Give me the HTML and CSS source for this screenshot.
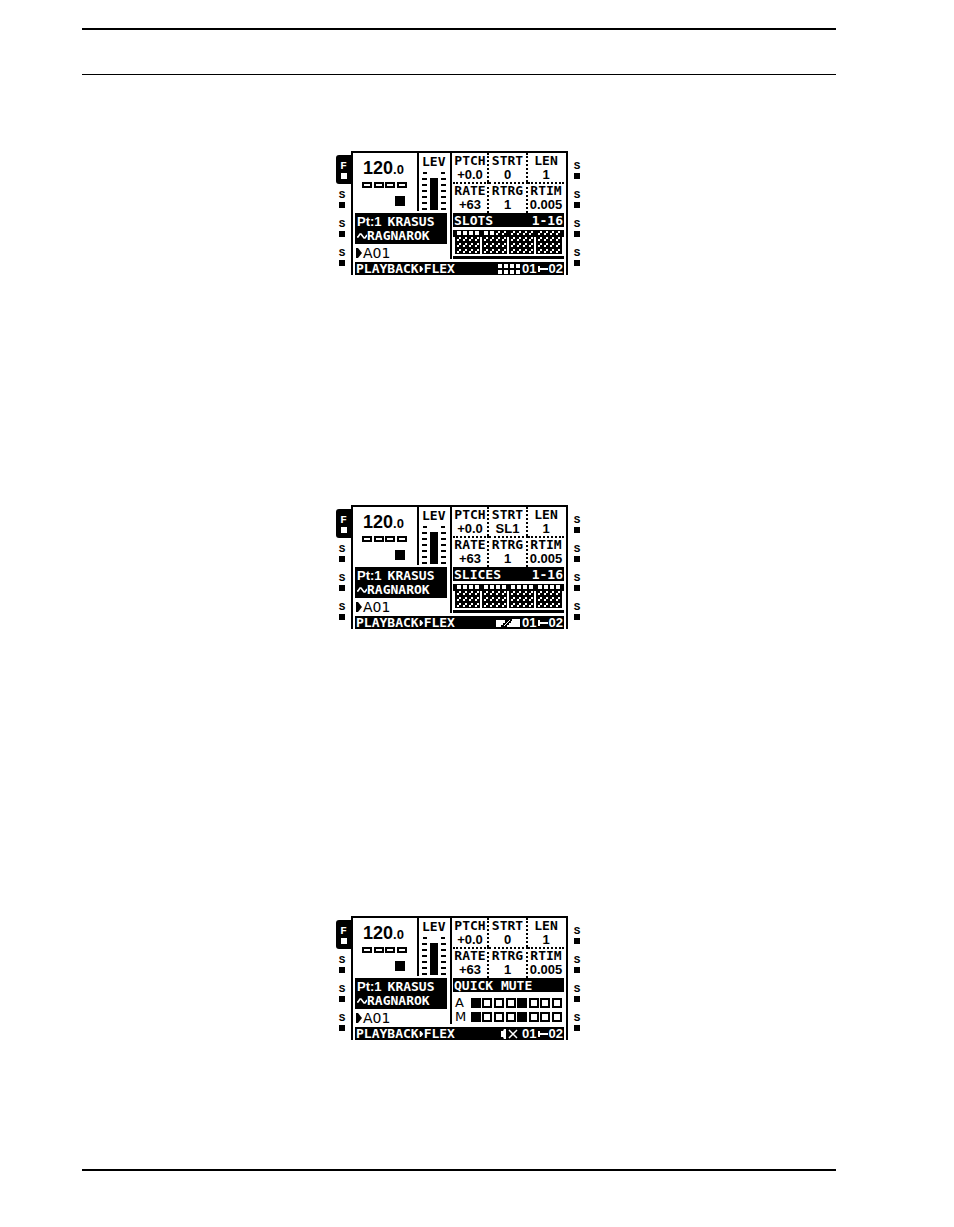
FILE: index.html
```
<!DOCTYPE html>
<html lang="en">
<head>
    <meta charset="UTF-8">
    <meta name="viewport" content="width=device-width, initial-scale=1.0">
    <title>Quick mute, slots and slices</title>
    <link rel="stylesheet" href="styles.css">
</head>
<body>
    <!-- Shared LCD glyphs -->
    <svg class="defs" aria-hidden="true">
        <symbol id="play" viewBox="0 0 6 10"><path d="M0 0h2l4 5l-4 5h-2z"/></symbol>
        <symbol id="wave" viewBox="0 0 10 6"><path d="M0 4h1l2-3h1l3 4h1l2-3" fill="none" stroke="currentColor" stroke-width="1.6"/></symbol>
        <symbol id="link" viewBox="0 0 10 6"><path d="M0 0h2v2h8v2h-8v2h-2z"/></symbol>
        <symbol id="beats" viewBox="0 0 45 6">
            <path d="M1 1h8v4h-8zM13 1h8v4h-8zM24 1h8v4h-8zM36 1h8v4h-8z" fill="none" stroke="currentColor" stroke-width="2"/>
        </symbol>
        <symbol id="level" viewBox="0 0 24 38">
            <path d="M1 1h4M0 7h5M0 13h5M0 19h5M0 25h5M0 31h5M0 37h5M19 1h4M19 7h5M19 13h5M19 19h5M19 25h5M19 31h5M19 37h5" stroke="currentColor" stroke-width="2"/>
            <path d="M8 6h8v32h-8z"/>
        </symbol>
        <pattern id="hatch" width="6" height="6" patternUnits="userSpaceOnUse">
            <path d="M2 0h2v2h-2zM0 2h2v2h-2z" fill="#fff"/>
        </pattern>
        <pattern id="solid" width="6" height="6" patternUnits="userSpaceOnUse">
            <path d="M0 0h4v4h-4z" fill="#fff"/>
        </pattern>
        <symbol id="steps-back" viewBox="0 0 111 25">
            <path d="M0 0h111v7h-111zM2 6h25v18h-25zM29 6h25v18h-25zM56 6h25v18h-25zM83 6h26v18h-26z"/>
        </symbol>
        <g id="group-on">
            <path d="M0 0h24v6h-24z" fill="url(#solid)"/>
            <path d="M0 6h22v17h-22z" fill="url(#hatch)"/>
        </g>
        <g id="group-half">
            <path d="M0 0h12v6h-12z" fill="url(#solid)"/>
            <path d="M12 0h10v6h-10zM0 6h22v17h-22z" fill="url(#hatch)"/>
        </g>
        <g id="group-off">
            <path d="M0 0h22v23h-22z" fill="url(#hatch)"/>
        </g>
    </svg>

    <main class="page">
        <header class="page-head"></header>

        <section class="screen screen-slots">
            <div class="keys">
                <div class="key on">F<i></i></div>
                <div class="key">S<i></i></div>
                <div class="key">S<i></i></div>
                <div class="key">S<i></i></div>
            </div>
            <div class="lcd">
                <div class="left">
                    <div class="top">
                        <div class="tempo">
                            <div class="bpm">120<small>.0</small></div>
                            <svg class="beats"><use href="#beats"/></svg>
                            <div class="stop"></div>
                        </div>
                        <div class="lev">
                            <span>LEV</span>
                            <svg class="level"><use href="#level"/></svg>
                        </div>
                    </div>
                    <div class="part">
                        <div><b>Pt:1</b>KRASUS</div>
                        <div><svg class="wave"><use href="#wave"/></svg>RAGNAROK</div>
                    </div>
                    <div class="pattern"><svg class="arrow"><use href="#play"/></svg>A01</div>
                </div>
                <div class="right">
                    <div class="params">
                        <div>PTCH<b>+0.0</b></div>
                        <div>STRT<b>0</b></div>
                        <div>LEN<b>1</b></div>
                        <div>RATE<b>+63</b></div>
                        <div>RTRG<b>1</b></div>
                        <div>RTIM<b>0.005</b></div>
                    </div>
                    <div class="bar"><span>SLOTS</span><span>1-16</span></div>
                    <svg class="steps" viewBox="0 0 111 25">
                        <use href="#steps-back"/>
                        <use href="#group-on" transform="translate(4 1)"/>
                        <use href="#group-half" transform="translate(31 1)"/>
                        <use href="#group-off" transform="translate(58 1)"/>
                        <use href="#group-off" transform="translate(85 1)"/>
                    </svg>
                    <div class="track"></div>
                </div>
                <footer class="status">
                    <span>PLAYBACK</span><svg class="sep"><use href="#play"/></svg><span>FLEX</span>
                    <svg class="mode" viewBox="0 0 22 10">
                        <path d="M0 0h4v4h-4zM6 0h4v4h-4zM12 0h4v4h-4zM18 0h4v4h-4zM0 6h4v4h-4zM6 6h4v4h-4zM12 6h4v4h-4zM18 6h4v4h-4z"/>
                    </svg>
                    <b>01</b><svg class="link"><use href="#link"/></svg><b>02</b>
                </footer>
            </div>
            <div class="keys">
                <div class="key">S<i></i></div>
                <div class="key">S<i></i></div>
                <div class="key">S<i></i></div>
                <div class="key">S<i></i></div>
            </div>
        </section>

        <section class="screen screen-slices">
            <div class="keys">
                <div class="key on">F<i></i></div>
                <div class="key">S<i></i></div>
                <div class="key">S<i></i></div>
                <div class="key">S<i></i></div>
            </div>
            <div class="lcd">
                <div class="left">
                    <div class="top">
                        <div class="tempo">
                            <div class="bpm">120<small>.0</small></div>
                            <svg class="beats"><use href="#beats"/></svg>
                            <div class="stop"></div>
                        </div>
                        <div class="lev">
                            <span>LEV</span>
                            <svg class="level"><use href="#level"/></svg>
                        </div>
                    </div>
                    <div class="part">
                        <div><b>Pt:1</b>KRASUS</div>
                        <div><svg class="wave"><use href="#wave"/></svg>RAGNAROK</div>
                    </div>
                    <div class="pattern"><svg class="arrow"><use href="#play"/></svg>A01</div>
                </div>
                <div class="right">
                    <div class="params">
                        <div>PTCH<b>+0.0</b></div>
                        <div>STRT<b>SL1</b></div>
                        <div>LEN<b>1</b></div>
                        <div>RATE<b>+63</b></div>
                        <div>RTRG<b>1</b></div>
                        <div>RTIM<b>0.005</b></div>
                    </div>
                    <div class="bar"><span>SLICES</span><span>1-16</span></div>
                    <svg class="steps" viewBox="0 0 111 25">
                        <use href="#steps-back"/>
                        <use href="#group-on" transform="translate(4 1)"/>
                        <use href="#group-on" transform="translate(31 1)"/>
                        <use href="#group-on" transform="translate(58 1)"/>
                        <use href="#group-on" transform="translate(85 1)"/>
                    </svg>
                    <div class="track"></div>
                </div>
                <footer class="status">
                    <span>PLAYBACK</span><svg class="sep"><use href="#play"/></svg><span>FLEX</span>
                    <svg class="mode wide" viewBox="0 0 24 10">
                        <path d="M0 2h9v3h-2v2h-2v2h-5zM16 1h8v8h-13v-2h2v-2h2v-2h1z"/>
                        <path d="M8 8l6-6" stroke="currentColor"/>
                    </svg>
                    <b>01</b><svg class="link"><use href="#link"/></svg><b>02</b>
                </footer>
            </div>
            <div class="keys">
                <div class="key">S<i></i></div>
                <div class="key">S<i></i></div>
                <div class="key">S<i></i></div>
                <div class="key">S<i></i></div>
            </div>
        </section>

        <section class="screen screen-mute">
            <div class="keys">
                <div class="key on">F<i></i></div>
                <div class="key">S<i></i></div>
                <div class="key">S<i></i></div>
                <div class="key">S<i></i></div>
            </div>
            <div class="lcd">
                <div class="left">
                    <div class="top">
                        <div class="tempo">
                            <div class="bpm">120<small>.0</small></div>
                            <svg class="beats"><use href="#beats"/></svg>
                            <div class="stop"></div>
                        </div>
                        <div class="lev">
                            <span>LEV</span>
                            <svg class="level"><use href="#level"/></svg>
                        </div>
                    </div>
                    <div class="part">
                        <div><b>Pt:1</b>KRASUS</div>
                        <div><svg class="wave"><use href="#wave"/></svg>RAGNAROK</div>
                    </div>
                    <div class="pattern"><svg class="arrow"><use href="#play"/></svg>A01</div>
                </div>
                <div class="right">
                    <div class="params">
                        <div>PTCH<b>+0.0</b></div>
                        <div>STRT<b>0</b></div>
                        <div>LEN<b>1</b></div>
                        <div>RATE<b>+63</b></div>
                        <div>RTRG<b>1</b></div>
                        <div>RTIM<b>0.005</b></div>
                    </div>
                    <div class="bar"><span>QUICK MUTE</span></div>
                    <div class="mutes">
                        <div class="mute-row">
                            <span>A</span>
                            <input type="checkbox" aria-label="Audio track 1" checked>
                            <input type="checkbox" aria-label="Audio track 2">
                            <input type="checkbox" aria-label="Audio track 3">
                            <input type="checkbox" aria-label="Audio track 4">
                            <input type="checkbox" aria-label="Audio track 5" checked>
                            <input type="checkbox" aria-label="Audio track 6">
                            <input type="checkbox" aria-label="Audio track 7">
                            <input type="checkbox" aria-label="Audio track 8">
                        </div>
                        <div class="mute-row">
                            <span>M</span>
                            <input type="checkbox" aria-label="MIDI track 1" checked>
                            <input type="checkbox" aria-label="MIDI track 2">
                            <input type="checkbox" aria-label="MIDI track 3">
                            <input type="checkbox" aria-label="MIDI track 4">
                            <input type="checkbox" aria-label="MIDI track 5" checked>
                            <input type="checkbox" aria-label="MIDI track 6">
                            <input type="checkbox" aria-label="MIDI track 7">
                            <input type="checkbox" aria-label="MIDI track 8">
                        </div>
                    </div>
                </div>
                <footer class="status">
                    <span>PLAYBACK</span><svg class="sep"><use href="#play"/></svg><span>FLEX</span>
                    <svg class="mode" viewBox="0 0 22 10">
                        <path d="M3 2h2l1-2h2v10h-2l-1-2h-2z"/>
                        <path d="M11 1l8 8M19 1l-8 8" stroke="currentColor" stroke-width="1.5"/>
                    </svg>
                    <b>01</b><svg class="link"><use href="#link"/></svg><b>02</b>
                </footer>
            </div>
            <div class="keys">
                <div class="key">S<i></i></div>
                <div class="key">S<i></i></div>
                <div class="key">S<i></i></div>
                <div class="key">S<i></i></div>
            </div>
        </section>

        <div class="page-foot"></div>
    </main>
</body>
</html>
```
FILE: styles.css
```
* {
    box-sizing: border-box;
}

body {
    margin: 0;
    background: #fff;
    color: #000;
    font: bold 13px/14px "DejaVu Sans Mono", monospace;
}

svg {
    display: block;
    fill: currentColor;
    flex: none;
}

.defs {
    position: absolute;
    width: 0;
    height: 0;
}

.page {
    padding: 28px 118px 56px 82px;
}

.page-head {
    height: 47px;
    border-top: 2px solid #000;
    border-bottom: 1px solid #000;
}

.page-foot {
    margin-top: 129px;
    border-top: 2px solid #000;
}

/* One LCD with its row of keys on each side */
.screen {
    display: grid;
    grid-template-columns: 15px 217px 14px;
    justify-content: center;
}

.screen-slots {
    margin-top: 76px;
}

.screen-slices {
    margin-top: 230px;
}

.screen-mute {
    margin-top: 287px;
}

.keys {
    display: flex;
    flex-direction: column;
    padding-top: 4px;
}

.key {
    display: flex;
    flex-direction: column;
    align-items: center;
    gap: 2px;
    height: 29px;
    padding: 6px 3px 0 0;
    font: bold 11px/10px "Liberation Mono", monospace;
}

.keys:last-child .key {
    padding: 6px 0 0 4px;
}

.key i {
    width: 6px;
    height: 6px;
    background: currentColor;
}

.key.on {
    padding-right: 0;
    background: #000;
    color: #fff;
    border-radius: 3px 0 0 3px;
}

.lcd {
    display: grid;
    grid-template-columns: 97px 1fr;
    border: solid #000;
    border-width: 2px 2px 0;
}

.top {
    display: flex;
    height: 58px;
}

.tempo {
    width: 64px;
    padding-top: 5px;
}

.bpm {
    padding-left: 10px;
    font: bold 18px/20px "Liberation Sans", sans-serif;
}

.bpm small {
    font-size: 13px;
}

.beats {
    width: 45px;
    height: 6px;
    margin: 2px 0 0 9px;
}

.stop {
    width: 10px;
    height: 10px;
    margin: 8px 0 0 42px;
    background: #000;
}

.lev {
    flex: 1;
    padding: 2px 0 0 3px;
    border-left: 2px solid #000;
}

.level {
    width: 24px;
    height: 38px;
    margin-top: 3px;
}

.part {
    height: 31px;
    margin: 2px 3px 0 2px;
    padding: 2px 0 0 2px;
    background: #000;
    color: #fff;
}

.part div,
.pattern {
    display: flex;
    align-items: center;
}

.part b {
    margin-right: 6px;
    font-family: "Liberation Sans", sans-serif;
}

.wave {
    width: 10px;
    height: 6px;
}

.pattern {
    height: 12px;
    gap: 1px;
    margin-top: 3px;
    padding-left: 3px;
    font: 14px/12px "DejaVu Sans", sans-serif;
}

.arrow {
    width: 6px;
    height: 10px;
}

.right {
    padding: 0 2px 0 1px;
    border-left: 2px solid #000;
}

.params {
    display: grid;
    grid-template-columns: 36fr 39fr 36fr;
}

.params div {
    display: flex;
    flex-direction: column;
    align-items: center;
    height: 29px;
    padding-top: 1px;
}

.params div:nth-child(n + 4) {
    height: 31px;
    padding-top: 0;
    border-top: 2px dotted #000;
}

.params div:not(:nth-child(3n)) {
    border-right: 2px dotted #000;
}

.params b,
.status b {
    font-family: "Liberation Sans", sans-serif;
}

.bar {
    display: flex;
    justify-content: space-between;
    height: 14px;
    padding: 1px 1px 0;
    background: #000;
    color: #fff;
}

.steps {
    width: 100%;
    height: 25px;
    margin-top: 3px;
    shape-rendering: crispEdges;
}

.track {
    height: 3px;
    margin-top: 1px;
    background: #000;
}

.mutes {
    display: grid;
    gap: 4px;
    padding: 6px 2px 2px;
}

.mute-row {
    display: flex;
    align-items: center;
    justify-content: space-between;
    height: 10px;
}

.mute-row span {
    width: 14px;
    font: 13px/10px "DejaVu Sans", sans-serif;
}

.mute-row input {
    appearance: none;
    width: 10px;
    height: 10px;
    margin: 0;
    border: 2px solid #000;
}

.mute-row input:checked {
    background: #000;
}

.status {
    grid-column: 1 / -1;
    display: flex;
    align-items: center;
    height: 13px;
    margin: 3px 2px 0;
    padding: 0 1px;
    background: #000;
    color: #fff;
}

.sep {
    width: 5px;
    height: 6px;
}

.mode {
    width: 22px;
    height: 10px;
    margin: 0 2px 0 auto;
}

.mode.wide {
    width: 24px;
}

.link {
    width: 10px;
    height: 6px;
    margin: 0 1px;
}
```
